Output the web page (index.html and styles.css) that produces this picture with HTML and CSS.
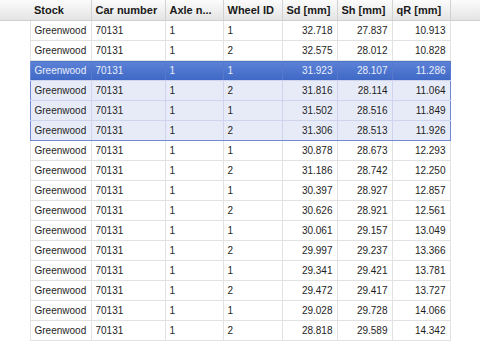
FILE: index.html
```html
<!DOCTYPE html>
<html lang="en">
<head>
  <meta charset="UTF-8" />
  <title>Wheel measurements</title>
  <link rel="stylesheet" href="styles.css">
</head>
<body>
  <table class="grid">
    <colgroup>
      <col class="w-gutter">
      <col class="w-stock">
      <col class="w-car">
      <col class="w-axle">
      <col class="w-wheel">
      <col class="w-num">
      <col class="w-num">
      <col class="w-qr">
      <col>
    </colgroup>
    <thead>
      <tr>
        <th class="gutter"></th>
        <th>Stock</th>
        <th>Car number</th>
        <th>Axle n...</th>
        <th>Wheel ID</th>
        <th>Sd [mm]</th>
        <th>Sh [mm]</th>
        <th>qR [mm]</th>
        <th class="filler"></th>
      </tr>
    </thead>
    <tbody id="rows"></tbody>
  </table>

  <script>
    const data = [
      ["Greenwood", "70131", "1", "1", "32.718", "27.837", "10.913"],
      ["Greenwood", "70131", "1", "2", "32.575", "28.012", "10.828"],
      ["Greenwood", "70131", "1", "1", "31.923", "28.107", "11.286"],
      ["Greenwood", "70131", "1", "2", "31.816", "28.114", "11.064"],
      ["Greenwood", "70131", "1", "1", "31.502", "28.516", "11.849"],
      ["Greenwood", "70131", "1", "2", "31.306", "28.513", "11.926"],
      ["Greenwood", "70131", "1", "1", "30.878", "28.673", "12.293"],
      ["Greenwood", "70131", "1", "2", "31.186", "28.742", "12.250"],
      ["Greenwood", "70131", "1", "1", "30.397", "28.927", "12.857"],
      ["Greenwood", "70131", "1", "2", "30.626", "28.921", "12.561"],
      ["Greenwood", "70131", "1", "1", "30.061", "29.157", "13.049"],
      ["Greenwood", "70131", "1", "2", "29.997", "29.237", "13.366"],
      ["Greenwood", "70131", "1", "1", "29.341", "29.421", "13.781"],
      ["Greenwood", "70131", "1", "2", "29.472", "29.417", "13.727"],
      ["Greenwood", "70131", "1", "1", "29.028", "29.728", "14.066"],
      ["Greenwood", "70131", "1", "2", "28.818", "29.589", "14.342"]
    ];

    // rows 2..5 are selected, row 2 has focus
    const selFirst = 2, selLast = 5, focusRow = 2;
    const tbody = document.getElementById('rows');

    data.forEach((row, i) => {
      const tr = document.createElement('tr');
      if (i >= selFirst && i <= selLast) tr.classList.add('sel');
      if (i === selFirst) tr.classList.add('sel-top');
      if (i === selLast) tr.classList.add('sel-bottom');
      if (i === focusRow) tr.classList.add('focus');

      tr.appendChild(document.createElement('td')).className = 'gutter';
      row.forEach((val, c) => {
        const td = document.createElement('td');
        td.textContent = val;
        if (c >= 4) td.className = 'num';
        tr.appendChild(td);
      });
      tr.appendChild(document.createElement('td')).className = 'filler';
      tbody.appendChild(tr);
    });
  </script>
</body>
</html>
```

FILE: styles.css
```css
body {
  margin: 0;
  background: #fff;
  font-family: "Liberation Sans", Arial, sans-serif;
  color: #1e1e1e;
}

.grid {
  width: 480px;
  border-collapse: collapse;
  table-layout: fixed;
  font-size: 10px;
}

.w-gutter { width: 30px; }
.w-stock  { width: 61px; }
.w-car    { width: 74px; }
.w-axle   { width: 58px; }
.w-wheel  { width: 59px; }
.w-num    { width: 55px; }
.w-qr     { width: 58px; }

.grid th {
  height: 20px;
  padding: 0 4px;
  text-align: left;
  font-size: 11px;
  font-weight: bold;
  color: #1a1a1a;
  white-space: nowrap;
  overflow: hidden;
  background: linear-gradient(#fbfbfb, #f0f0f0 50%, #e4e4e4);
  border-right: 1px solid #d2d2d2;
  border-bottom: 1px solid #cfcfcf;
}

.grid th.gutter,
.grid th.filler {
  border-right: none;
}

.grid td {
  height: 19px;
  padding: 0 4px;
  white-space: nowrap;
  overflow: hidden;
  border: 1px solid #e2e2e2;
  border-top: none;
}

.grid td.num {
  text-align: right;
}

.grid td.gutter,
.grid td.filler {
  border: none;
}

/* selection block */
.grid tr.sel td {
  background: #e7ebf8;
  border-color: #cdd4ec;
}

.grid tr.sel td.gutter,
.grid tr.sel td.filler {
  background: #fff;
}

.grid tr.sel td:nth-child(2) { border-left: 1px solid #6f8ad0; }
.grid tr.sel td:nth-child(8) { border-right: 1px solid #6f8ad0; }
.grid tr.sel-top td:not(.gutter):not(.filler) { border-top: 1px solid #6f8ad0; }
.grid tr.sel-bottom td:not(.gutter):not(.filler) { border-bottom: 1px solid #6f8ad0; }

.grid tr.focus td:not(.gutter):not(.filler) {
  background: linear-gradient(#5c82d6, #3f68c6);
  color: #e9eef9;
  border-right-color: #5577cc;
}
```
